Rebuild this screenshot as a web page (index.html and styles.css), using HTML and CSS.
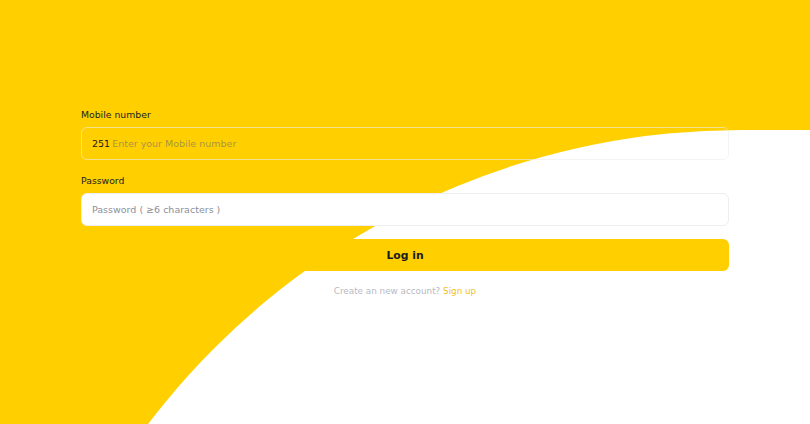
FILE: index.html
```html
<!DOCTYPE html>
<html lang="en">
<head>
    <meta charset="UTF-8">
    <meta name="viewport" content="width=device-width, initial-scale=1.0">
    <title>Log in</title>
    <link rel="stylesheet" href="styles.css">
</head>
<body>

<div class="backdrop">
    <div class="bg-curve"></div>
</div>

<main class="login">
    <label class="field-label" for="mobile">Mobile number</label>
    <div class="field">
        <span class="prefix">251</span>
        <input type="tel" id="mobile" placeholder="Enter your Mobile number">
    </div>

    <label class="field-label" for="password">Password</label>
    <div class="field field-white">
        <input type="password" id="password" placeholder="Password ( ≥6 characters )">
    </div>

    <button class="btn-login">Log in</button>

    <p class="signup">Create an new account? <a href="#">Sign up</a></p>
</main>

</body>
</html>
```

FILE: styles.css
```css
html, body {
    height: 100%;
}
body {
    margin: 0;
    font-family: "DejaVu Sans", Verdana, sans-serif;
    background: #FFCF00;
    overflow: hidden;
    position: relative;
}
.backdrop {
    position: absolute;
    top: 0;
    left: 0;
    right: 0;
    bottom: 0;
    overflow: hidden;
}
/* the white sweep behind the form */
.bg-curve {
    position: absolute;
    left: -4px;
    top: 130px;
    width: 820px;
    height: 900px;
    background: #fff;
    border-top-left-radius: 745px;
}
.login {
    position: relative;
    width: 80%;
    margin: 0 auto;
    padding-top: 108px;
}
.field-label {
    display: block;
    font-size: 9.3px;
    line-height: 14px;
    color: #222;
    margin-bottom: 5px;
}
.field {
    display: flex;
    align-items: center;
    height: 33px;
    box-sizing: border-box;
    padding: 0 10px;
    border: 1px solid rgba(236, 236, 236, 0.6);
    border-radius: 6px;
    margin-bottom: 14px;
}
.field-white {
    background: #fff;
    border-color: #eee;
    margin-bottom: 13px;
}
.prefix {
    font-size: 9.5px;
    color: #1a1a1a;
    margin-right: 2px;
}
.field input {
    flex: 1;
    border: none;
    outline: none;
    background: transparent;
    padding: 0;
    font-family: inherit;
    font-size: 9.5px;
    color: #222;
}
.field input::placeholder {
    color: rgba(90, 95, 120, 0.55);
}
.field-white input::placeholder {
    color: #8c909a;
}
.btn-login {
    display: block;
    width: 100%;
    height: 32px;
    border: none;
    border-radius: 6px;
    background: #FFCF00;
    font-family: inherit;
    font-size: 10.8px;
    font-weight: bold;
    color: #1a1a1a;
    cursor: pointer;
}
.signup {
    margin: 13px 0 0;
    text-align: center;
    font-size: 8.8px;
    line-height: 14px;
    color: #b8b9c2;
}
.signup a {
    color: #F2C21A;
    text-decoration: none;
}
```
